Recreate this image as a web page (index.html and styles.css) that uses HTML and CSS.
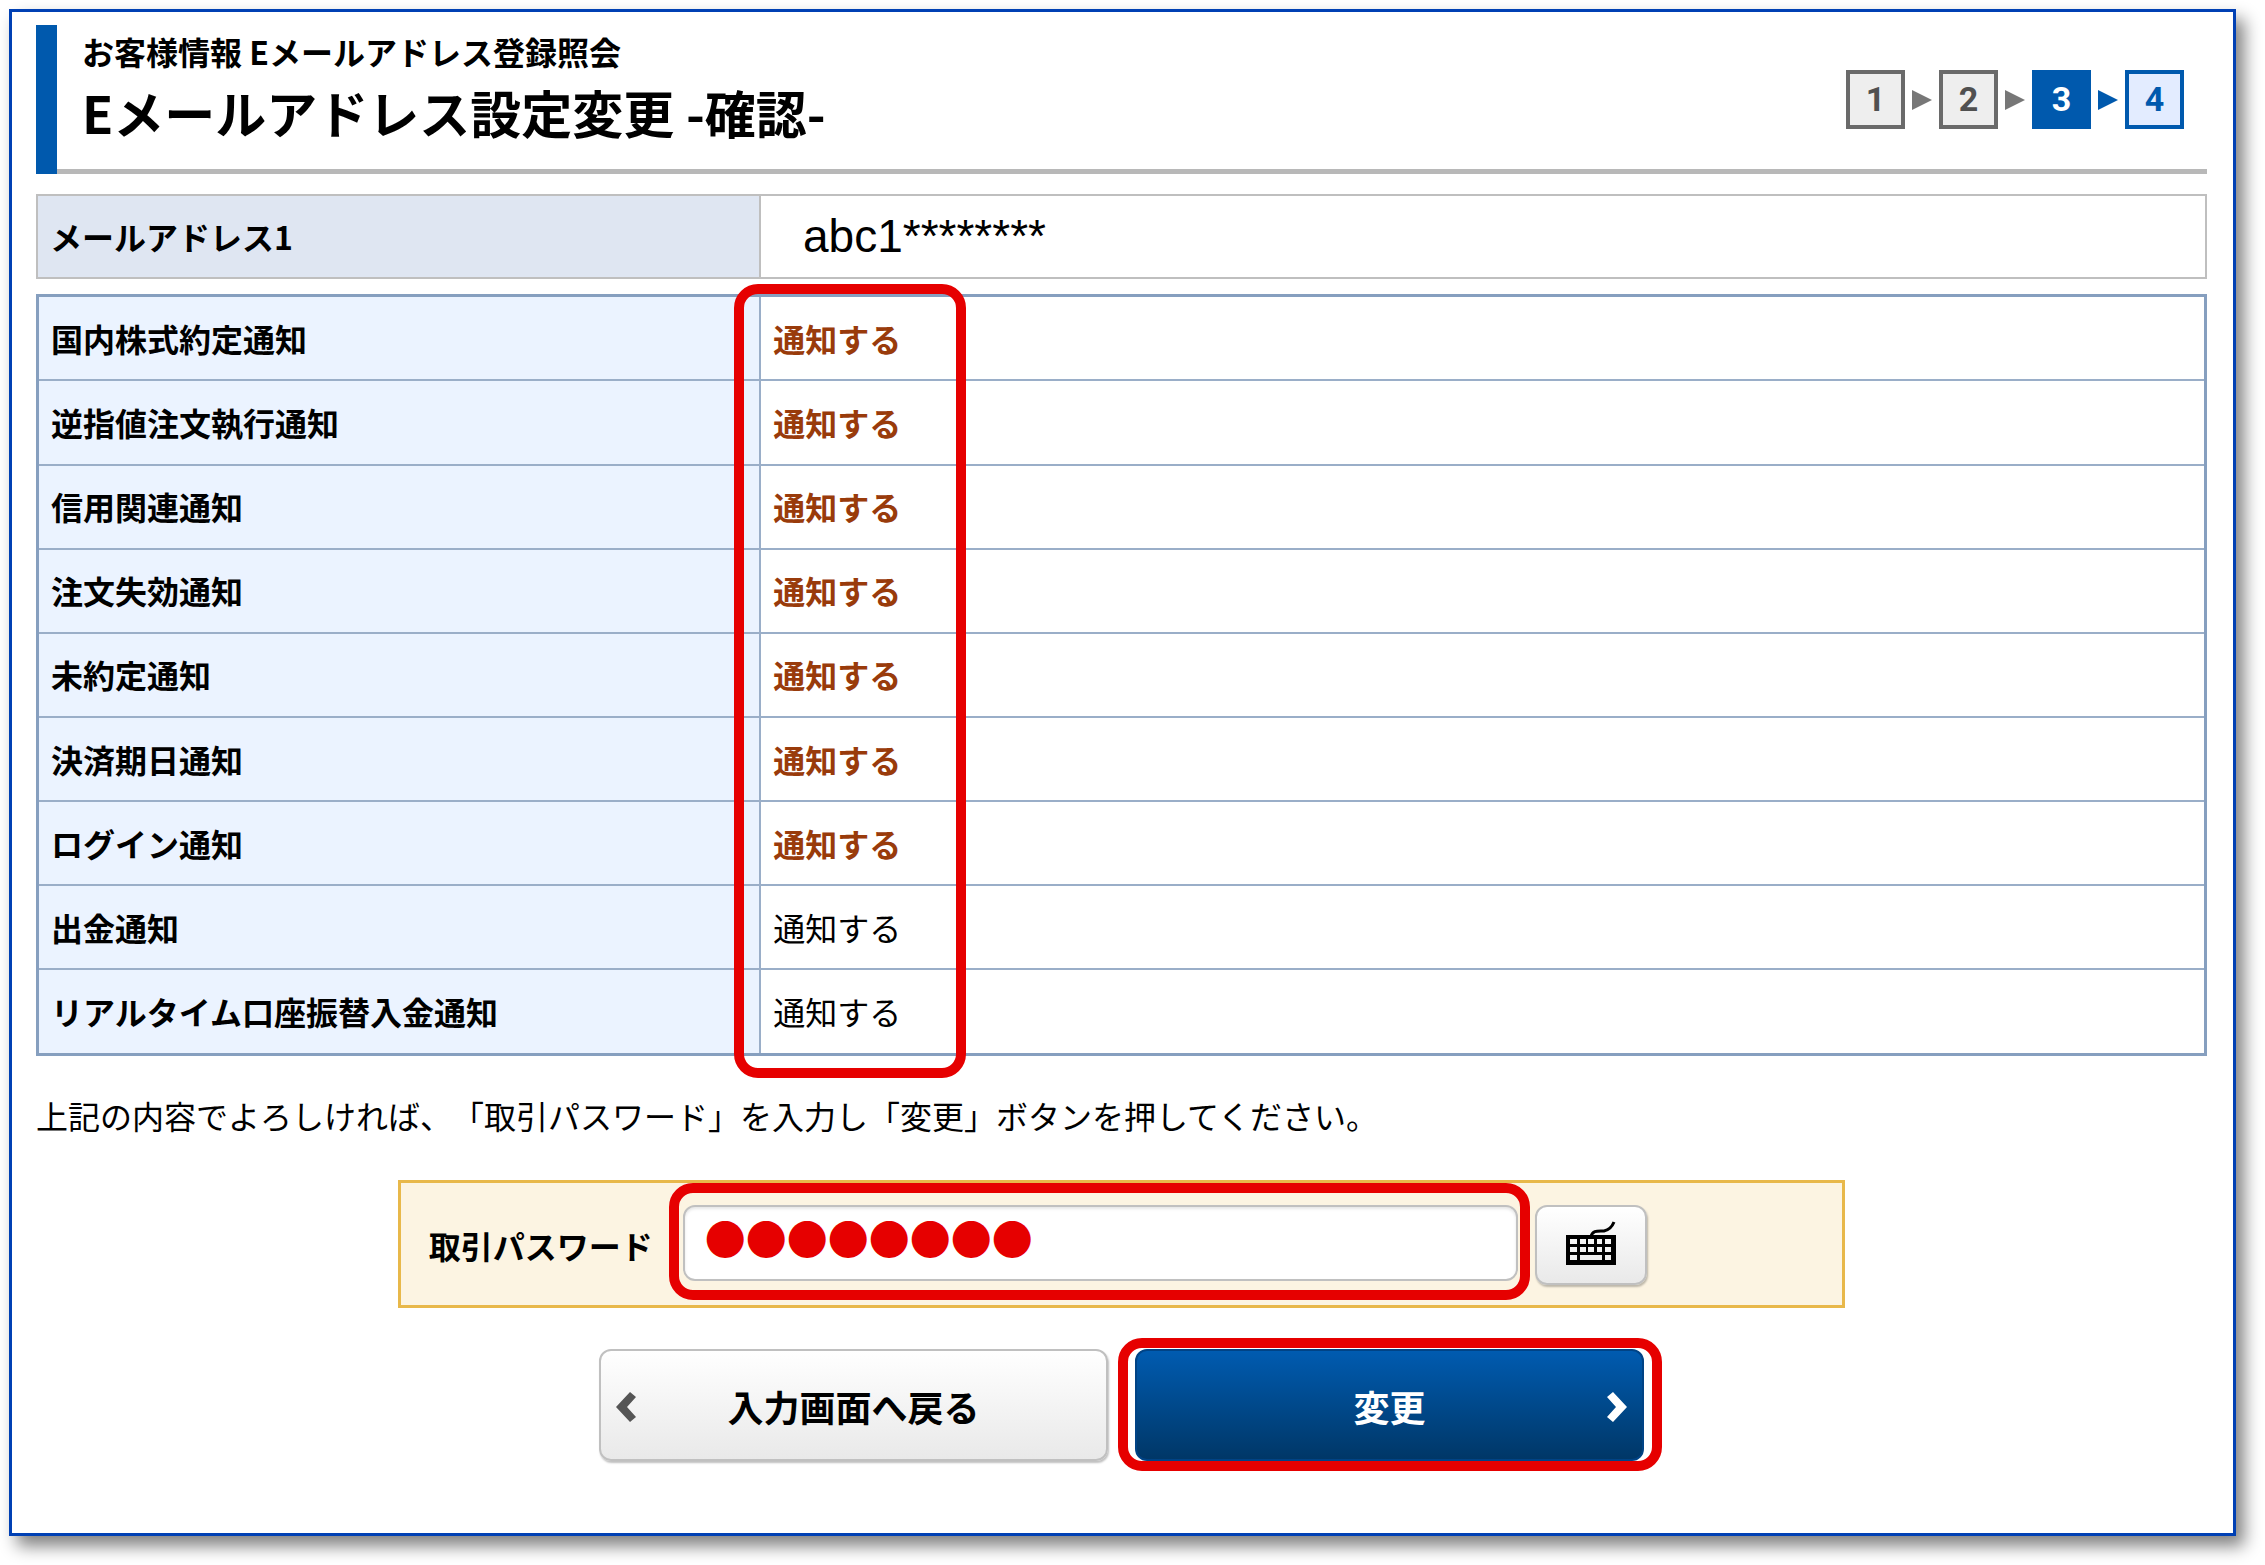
FILE: index.html
```html
<!DOCTYPE html>
<html lang="ja">
<head>
<meta charset="utf-8">
<meta name="viewport" content="width=device-width, initial-scale=1">
<title>Eメールアドレス設定変更 -確認-</title>
<link rel="stylesheet" href="styles.css">
</head>
<body>
<main class="card">
  <header class="page-head">
    <div class="titles">
      <p class="subtitle">お客様情報 Eメールアドレス登録照会</p>
      <h1 class="title">Eメールアドレス設定変更 -確認-</h1>
    </div>
    <ol class="steps">
      <li class="step">1</li>
      <li class="step">2</li>
      <li class="step step-current">3</li>
      <li class="step step-next">4</li>
    </ol>
  </header>

  <table class="grid grid-address">
    <tr><th scope="row">メールアドレス1</th><td class="address">abc1********</td></tr>
  </table>

  <div class="notices">
    <table class="grid grid-notices">
      <tr><th scope="row">国内株式約定通知</th><td class="changed">通知する</td></tr>
      <tr><th scope="row">逆指値注文執行通知</th><td class="changed">通知する</td></tr>
      <tr><th scope="row">信用関連通知</th><td class="changed">通知する</td></tr>
      <tr><th scope="row">注文失効通知</th><td class="changed">通知する</td></tr>
      <tr><th scope="row">未約定通知</th><td class="changed">通知する</td></tr>
      <tr><th scope="row">決済期日通知</th><td class="changed">通知する</td></tr>
      <tr><th scope="row">ログイン通知</th><td class="changed">通知する</td></tr>
      <tr><th scope="row">出金通知</th><td>通知する</td></tr>
      <tr><th scope="row">リアルタイム口座振替入金通知</th><td>通知する</td></tr>
    </table>
    <span class="mark mark-column"></span>
  </div>

  <p class="guide">上記の内容でよろしければ、「取引パスワード」を入力し「変更」ボタンを押してください。</p>

  <form class="confirm">
    <div class="password-box">
      <label class="password-label" for="password">取引パスワード</label>
      <div class="password-field">
        <input class="password-input" id="password" type="text" value="●●●●●●●●" autocomplete="off">
        <span class="mark mark-field"></span>
      </div>
      <button class="button key-button" type="button" aria-label="ソフトウェアキーボード">
        <svg class="key-icon" viewBox="0 0 50 44" aria-hidden="true">
          <path d="M25 16C26 9 32 10 38 10C43 9 46 6 48 1" fill="none" stroke="#000" stroke-width="3"/>
          <path fill="#000" fill-rule="evenodd" d="M0 14H50V44H0ZM4 18V23H11V18ZM14 18V23H20V18ZM22 18V23H28V18ZM31 18V23H36V18ZM39 18V23H45V18ZM4 26V31H11V26ZM14 26V31H20V26ZM22 26V31H28V26ZM31 26V31H36V26ZM39 26V31H45V26ZM4 34V39H11V34ZM14 34V39H36V34ZM39 34V39H45V34Z"/>
        </svg>
      </button>
    </div>

    <div class="actions">
      <button class="button action" type="button">
        <svg class="chevron chevron-left" viewBox="0 0 20 30" aria-hidden="true"><path d="M14 0L20 5L11 15L20 25L14 30L0 15Z" fill="#555"/></svg>
        入力画面へ戻る
      </button>
      <div class="submit">
        <button class="button action action-primary" type="submit">
          変更
          <svg class="chevron chevron-right" viewBox="0 0 20 30" aria-hidden="true"><path d="M6 0L0 5L9 15L0 25L6 30L20 15Z" fill="#fff"/></svg>
        </button>
        <span class="mark mark-submit"></span>
      </div>
    </div>
  </form>
</main>
</body>
</html>
```
FILE: styles.css
```css
* {
  box-sizing: border-box;
}

html {
  background: #fff;
}

body {
  margin: 0;
  padding: 9px 29px 29px 9px;
  color: #000;
  font-family: "Noto Sans CJK JP", sans-serif;
  font-size: 32px;
  line-height: 48px;
  text-spacing-trim: space-all;
}

p, h1, ol {
  margin: 0;
  padding: 0;
}

.card {
  padding: 13px 26px 72px 24px;
  border: 3px solid #0040b4;
  background: #fff;
  box-shadow: 8px 10px 16px #808080;
}

/* Heading */
.page-head {
  display: flex;
  justify-content: space-between;
  align-items: flex-start;
  height: 149px;
  padding: 2px 23px 0 25px;
  border-bottom: 5px solid #b8b8b8;
  margin-left: 21px;
  position: relative;
}

.page-head::before {
  content: "";
  position: absolute;
  top: 0;
  bottom: -5px;
  left: -21px;
  width: 21px;
  background: #0059ad;
}

.subtitle {
  font-weight: 700;
}

.title {
  font-size: 51px;
  font-weight: 700;
  line-height: 74px;
}

.steps {
  display: flex;
  gap: 34px;
  padding-top: 43px;
  list-style: none;
}

.step {
  position: relative;
  width: 59px;
  height: 59px;
  border: 4px solid #6a6a6a;
  background: #eee;
  color: #505050;
  font: 700 34px/51px Roboto, sans-serif;
  text-align: center;
}

.step + .step::before {
  content: "";
  position: absolute;
  top: 16px;
  left: -31px;
  border: solid transparent;
  border-width: 10px 0 10px 20px;
  border-left-color: #777;
}

.step-current {
  border-color: #0059ad;
  background: #0059ad;
  color: #fff;
}

.step-next {
  border-color: #0059ad;
  background: #e3ecff;
  color: #0059ad;
}

.step.step-next::before {
  border-left-color: #0059ad;
}

/* Tables */
.grid {
  width: 100%;
  border-collapse: collapse;
  table-layout: fixed;
}

.grid th,
.grid td {
  padding: 0 12px 1px;
  font-weight: 400;
  text-align: left;
}

.grid th {
  width: 33.333%;
  font-weight: 700;
}

.grid-address {
  height: 85px;
  margin-top: 20px;
}

.grid-address th,
.grid-address td {
  border: 2px solid #bfbfbf;
}

.grid-address th {
  background: #dfe6f2;
}

.grid-address .address {
  padding-left: 42px;
  font-family: "Liberation Sans", Arial, sans-serif;
  font-size: 46px;
}

.notices {
  position: relative;
  margin-top: 15px;
}

.grid-notices {
  height: 762px;
  border: 3px solid #869fbf;
}

.grid-notices th,
.grid-notices td {
  border: 2px solid #9aaec8;
}

.grid-notices th {
  background: #ebf3ff;
}

.grid-notices tr:first-child > * {
  border-top: 3px solid #869fbf;
}

.grid-notices .changed {
  color: #993b0b;
  font-weight: 700;
}

/* Red emphasis frames */
.mark {
  position: absolute;
  border: 10px solid #e60000;
  border-radius: 24px;
  pointer-events: none;
}

.mark-column {
  top: -10px;
  bottom: -22px;
  left: calc(33.333% - 26px);
  width: 232px;
}

.mark-field {
  inset: -22px -12px -19px -14px;
}

.mark-submit {
  inset: -11px -18px -10px -17px;
}

.guide {
  margin-top: 35px;
}

/* Password */
.password-box {
  display: flex;
  align-items: center;
  width: 66.667%;
  margin: 41px auto 0;
  padding: 22px 21px 20px 28px;
  border: 3px solid #e8b84a;
  background: #fcf4e2;
}

.password-label {
  flex: none;
  margin-right: 30px;
  font-weight: 700;
}

.password-field {
  position: relative;
  align-self: flex-start;
  width: 60%;
  margin-right: 17px;
}

.password-input {
  display: block;
  width: 100%;
  height: 76px;
  padding: 0 20px 12px;
  border: 2px solid #c0c0c0;
  border-radius: 12px;
  background: #fff;
  box-shadow: inset 0 2px 3px rgba(0, 0, 0, .1);
  color: #e60000;
  font: 400 41px "Noto Sans CJK JP", sans-serif;
}

/* Buttons */
.button {
  border: 2px solid #c0c0c0;
  border-radius: 12px;
  background: linear-gradient(#fff, #e9e9e9);
  box-shadow: 1px 2px 2px rgba(0, 0, 0, .25);
  color: #000;
  font: 700 36px/48px "Noto Sans CJK JP", sans-serif;
}

.key-button {
  flex: none;
  display: grid;
  place-items: center;
  width: 112px;
  height: 80px;
  padding: 0 0 4px;
}

.key-icon {
  width: 50px;
  height: 44px;
}

.actions {
  display: flex;
  justify-content: center;
  gap: 27px;
  margin-top: 41px;
}

.submit {
  position: relative;
}

.action {
  position: relative;
  width: 509px;
  height: 112px;
  padding: 2px 0 0;
}

.action-primary {
  border-color: #004385;
  background: linear-gradient(#005bb0, #003767);
  box-shadow: none;
  color: #fff;
}

.chevron {
  position: absolute;
  top: 41px;
  width: 20px;
  height: 30px;
}

.chevron-left {
  left: 15px;
}

.chevron-right {
  right: 15px;
}
```
